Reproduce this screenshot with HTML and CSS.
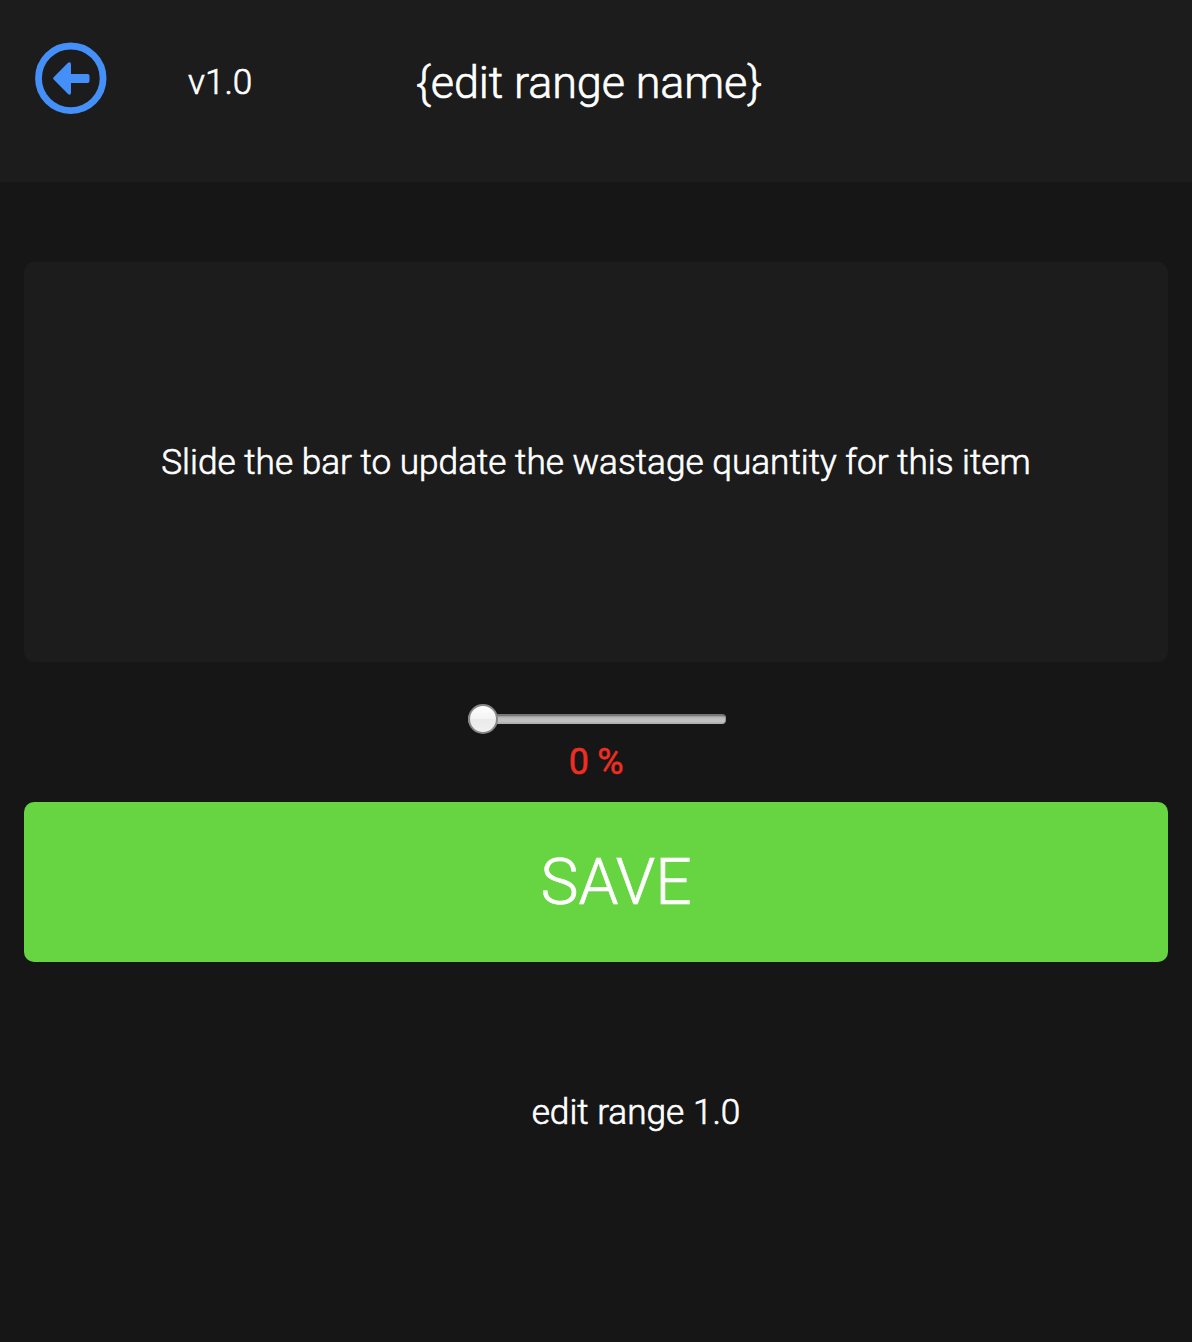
FILE: index.html
```html
<!DOCTYPE html>
<html lang="en">
<head>
<meta charset="utf-8">
<title>Edit range</title>
<link rel="stylesheet" href="styles.css">
</head>
<body>
<header class="topbar">
  <svg class="back" viewBox="0 0 72 72" aria-label="Back">
    <circle cx="35.8" cy="36.3" r="32.3" fill="none" stroke="#4590f8" stroke-width="6.8"/>
    <path d="M18.7 35.2 33 20.8Q36 19 36 22.5V32H52.5Q54.5 32 54.5 34V39Q54.5 41 52.5 41H36V50.5Q36 54 33 52L18.7 37.6Q17.4 36.4 18.7 35.2Z" fill="#4590f8"/>
  </svg>
  <span class="version">v1.0</span>
  <h1 class="title">{edit range name}</h1>
</header>
<main class="content">
  <section class="card"><p class="hint">Slide the bar to update the wastage quantity for this item</p></section>
  <div class="slider"><div class="track"></div><div class="thumb"></div></div>
  <div class="value"><span class="percent">0 %</span></div>
  <button class="save"><span class="save-label">SAVE</span></button>
</main>
<footer class="footer"><span class="footer-label">edit range 1.0</span></footer>
</body>
</html>
```
FILE: styles.css
```css
* { box-sizing: border-box; }
body { margin: 0; min-height: 1342px; background: #161616; color: #fff; font: 300 35.2px/42px Roboto, sans-serif; -webkit-text-stroke: .65px currentColor; }
.topbar { display: flex; align-items: flex-start; height: 182px; padding: 42px 0 0 35px; background: #1c1c1c; }
.back { width: 72px; height: 72px; flex: none; }
.version { margin: 19px 0 0 81px; width: 228px; }
.title { margin: 14px 0 0; font-size: 45px; line-height: 54px; font-weight: 300; letter-spacing: -.12px; white-space: nowrap; }
.content { padding: 80px 24px 0; }
.card { display: flex; align-items: center; justify-content: center; height: 400px; border-radius: 10px; background: #1c1c1c; }
.hint { margin: 0; white-space: nowrap; }
.slider { position: relative; width: 258px; height: 30px; margin: 42px 0 0 444px; padding-top: 10px; }
.track { height: 10px; border: 1px solid #999; border-top: 2px solid #777; border-bottom-color: #b0b0b0; border-radius: 4px; background: linear-gradient(#999, #bcbcbc 30%, #c2c2c2 80%, #aaa); }
.thumb { position: absolute; left: 0; top: 0; width: 30px; height: 30px; border: 2px solid #888; border-radius: 50%; background: linear-gradient(#fff, #f3f3f3 50%, #eaeaea 50%, #f0f0f0); }
.value { height: 68px; padding-top: 7px; text-align: center; color: #ef2e23; font-size: 36px; font-weight: 400; letter-spacing: -.37px; -webkit-text-stroke: .5px currentColor; }
.save { display: flex; align-items: center; justify-content: center; width: 100%; height: 160px; padding: 2px 0 0 40px; border: 0; border-radius: 10px; background: #67d542; color: #fff; font: 300 64px/76px Roboto, sans-serif; -webkit-text-stroke: .7px #fff; }
.footer { padding: 129px 0 0 80px; text-align: center; }
```
